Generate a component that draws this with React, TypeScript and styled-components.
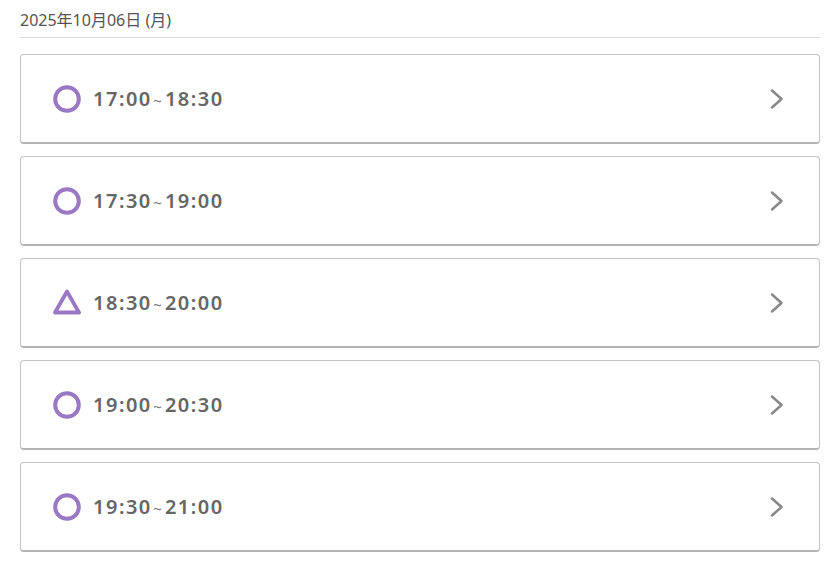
import React from "react";
import styled, { createGlobalStyle } from "styled-components";

const Global = createGlobalStyle`
  html, body { margin: 0; padding: 0; background: #fff; }
  body { font-family: "Noto Sans", "Noto Sans CJK JP", sans-serif; }
`;

const Page = styled.div`
  padding: 0 20px;
  width: 800px;
`;

const DateHeader = styled.div`
  font-size: 16px;
  color: #555;
  line-height: 20px;
  padding: 10px 0 7px;
  border-bottom: 1px solid #dcdcdc;
  font-family: "Noto Sans", "Noto Sans CJK JP", sans-serif;
`;

const List = styled.div`
  display: flex;
  flex-direction: column;
  gap: 12px;
  margin-top: 16px;
`;

const Card = styled.div`
  box-sizing: border-box;
  height: 90px;
  border: 1px solid #c4c4c4;
  border-bottom: 2px solid #b4b4b4;
  border-radius: 4px;
  display: flex;
  align-items: center;
  padding: 0 34px 0 32px;
  background: #fff;
`;

const Mark = styled.div`
  width: 28px;
  height: 28px;
  flex: none;
  display: flex;
  align-items: center;
  justify-content: center;
`;

const Time = styled.div`
  margin-left: 12px;
  font-size: 20px;
  font-weight: 600;
  letter-spacing: 1.5px;
  color: #666;
  display: flex;
  align-items: center;
  flex: 1;
`;

const Tilde = styled.span`
  font-weight: 400;
  font-size: 15px;
  letter-spacing: 0;
  margin: 3px 3px 0 1.5px;
  color: #777;
`;

const Chevron = styled.svg`
  width: 16px;
  height: 22px;
  flex: none;
`;

const PURPLE = "#9b78c4";

const Circle = () => (
  <svg width="28" height="28" viewBox="0 0 28 28">
    <circle cx="14" cy="14" r="11.8" fill="none" stroke={PURPLE} strokeWidth="4" />
  </svg>
);

const Triangle = () => (
  <svg width="28" height="27" viewBox="0 0 28 27">
    <path
      d="M14 2.5 L26 23.5 L2 23.5 Z"
      fill="none"
      stroke={PURPLE}
      strokeWidth="3.8"
      strokeLinejoin="round"
    />
  </svg>
);

const slots = [
  { start: "17:00", end: "18:30", mark: "circle" },
  { start: "17:30", end: "19:00", mark: "circle" },
  { start: "18:30", end: "20:00", mark: "triangle" },
  { start: "19:00", end: "20:30", mark: "circle" },
  { start: "19:30", end: "21:00", mark: "circle" },
];

export default function App() {
  return (
    <>
      <Global />
      <Page>
        <DateHeader>2025年10月06日 (月)</DateHeader>
        <List>
          {slots.map((s) => (
            <Card key={s.start}>
              <Mark>{s.mark === "circle" ? <Circle /> : <Triangle />}</Mark>
              <Time>
                {s.start}
                <Tilde>~</Tilde>
                {s.end}
              </Time>
              <Chevron viewBox="0 0 16 22">
                <path d="M3 2.5 L12.5 11 L3 19.5" fill="none" stroke="#888" strokeWidth="2.5" strokeLinecap="round" strokeLinejoin="round" />
              </Chevron>
            </Card>
          ))}
        </List>
      </Page>
    </>
  );
}
